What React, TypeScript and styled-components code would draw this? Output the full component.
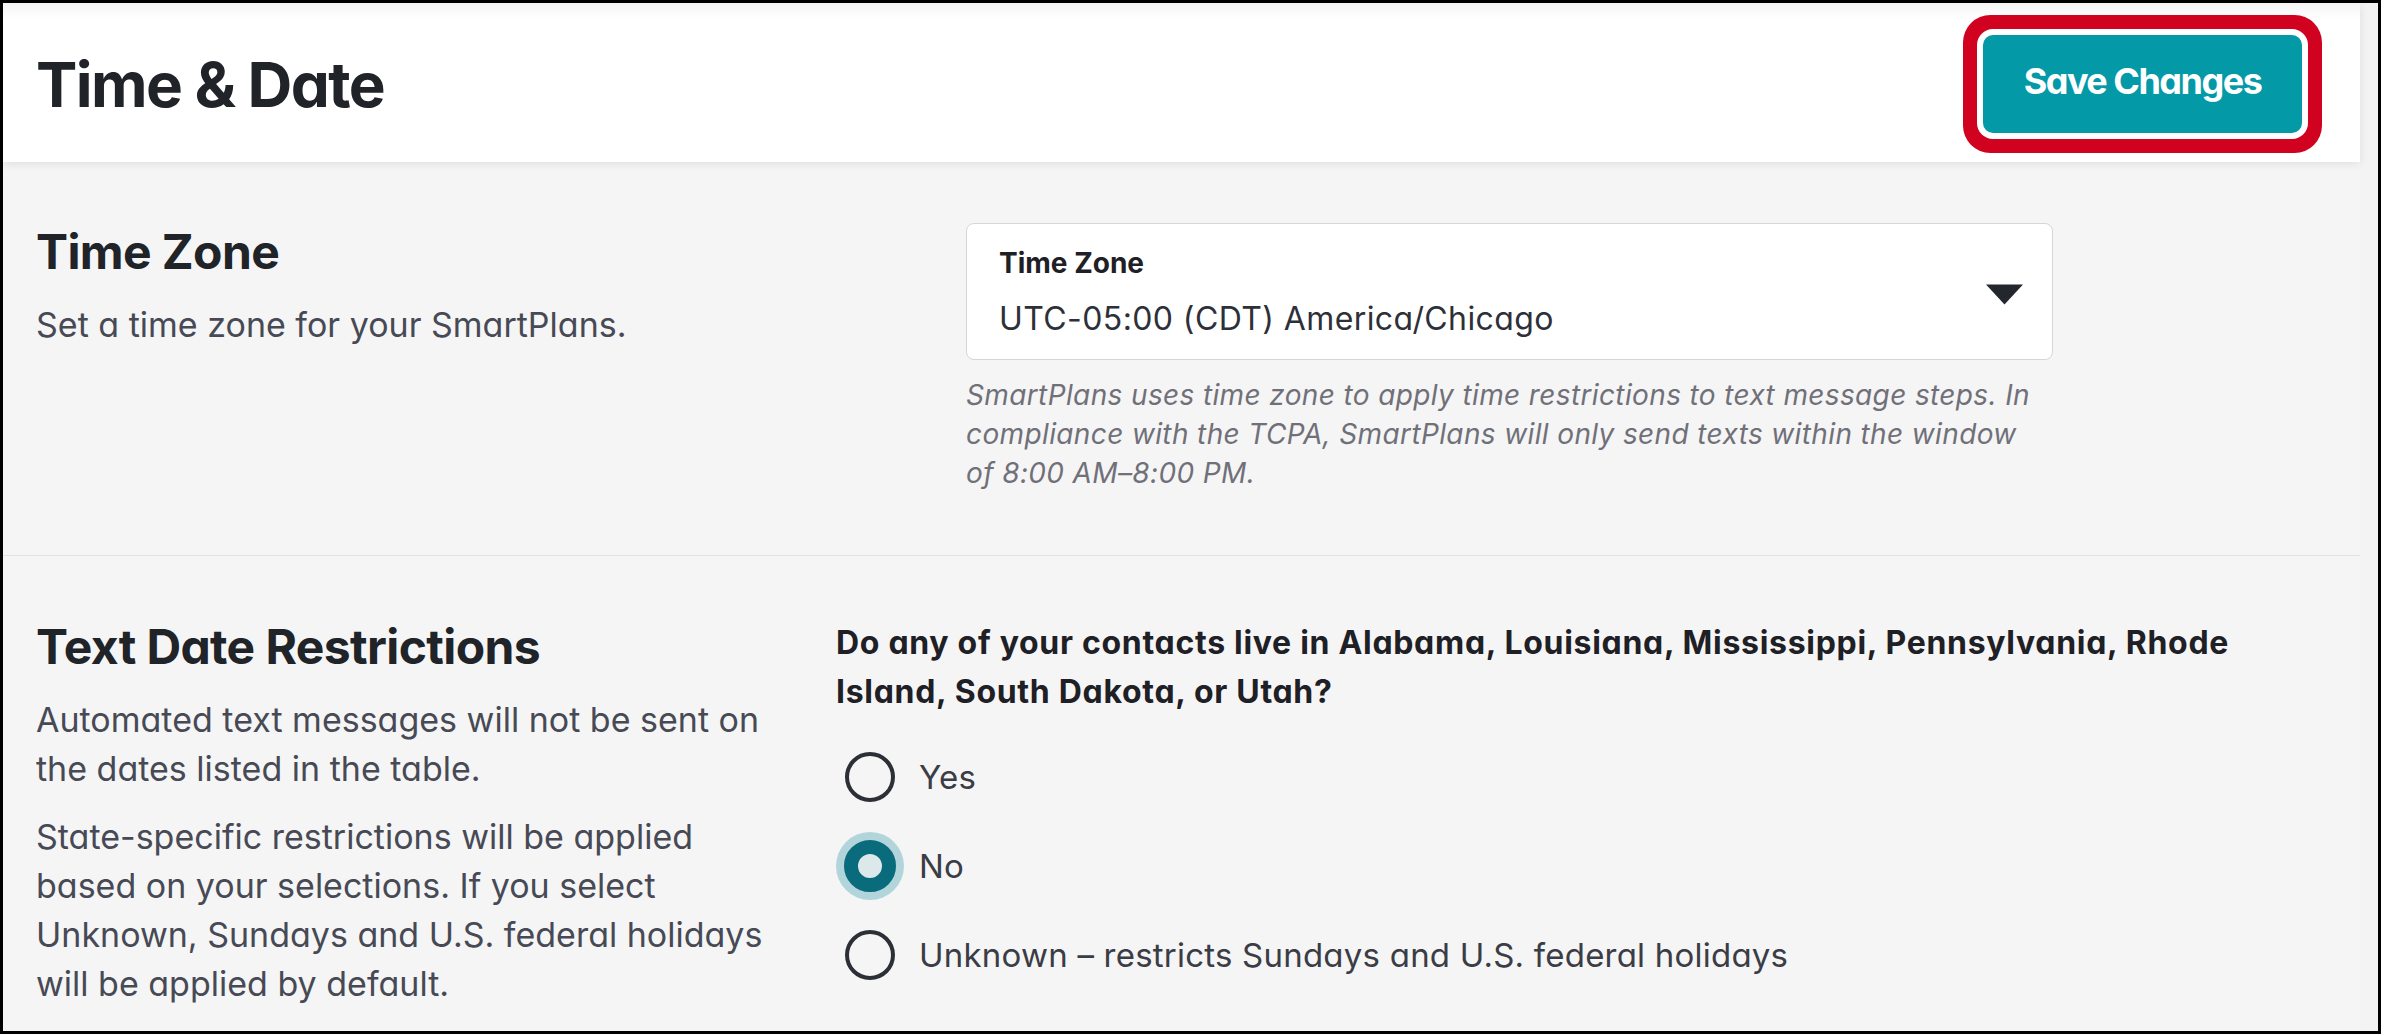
import React from "react";
import styled, { createGlobalStyle } from "styled-components";

const GlobalStyle = createGlobalStyle`
  html, body { margin: 0; padding: 0; background: #ffffff; }
  body {
    font-family: Inter, "Noto Sans", sans-serif;
    font-feature-settings: "cv11" 1;
    -webkit-font-smoothing: antialiased;
  }
  * { box-sizing: border-box; }
`;

const Frame = styled.div`
  width: 2381px;
  height: 1034px;
  border: 3px solid #000;
  background: #f3f3f4;
  display: flex;
  overflow: hidden;
`;

const Main = styled.main`
  flex: 1;
  display: flex;
  flex-direction: column;
  background: #f5f5f5;
  margin-right: 18px;
`;

const Header = styled.header`
  height: 159px;
  flex: none;
  display: flex;
  align-items: center;
  justify-content: space-between;
  padding: 0 58px 0 33px;
  background: linear-gradient(to bottom, #f5f5f6 0, #ffffff 16px);
  box-shadow: 0 2px 9px rgba(0, 0, 0, 0.09);
  position: relative;
  z-index: 1;
`;

const PageTitle = styled.h1`
  margin: 5px 0 0;
  font-size: 62px;
  line-height: 1;
  font-weight: 700;
  letter-spacing: -1.6px;
  color: #202328;
`;

const SaveButton = styled.button`
  width: 319px;
  height: 98px;
  margin-top: 3px;
  border: none;
  border-radius: 10px;
  background: #0399a7;
  color: #ffffff;
  font-family: inherit;
  font-feature-settings: inherit;
  font-size: 36px;
  font-weight: 700;
  letter-spacing: -1.5px;
  padding: 0 0 6px;
  box-shadow: 0 0 0 6px #ffffff, 0 0 0 20px #d0021f;
  cursor: pointer;
`;

const Section = styled.section<{ $cols: string; $divider?: boolean }>`
  display: grid;
  grid-template-columns: ${(p) => p.$cols};
  column-gap: 40px;
  align-items: start;
  padding: ${(p) => (p.$divider ? "62px" : "61px")} 0 62px 33px;
  border-top: ${(p) => (p.$divider ? "1px solid #e1e1e3" : "none")};
`;

const InfoColumn = styled.div`
  display: flex;
  flex-direction: column;
`;

const SectionTitle = styled.h2`
  margin: 0 0 19px;
  font-size: 48px;
  line-height: 57.6px;
  font-weight: 700;
  letter-spacing: -0.6px;
  color: #202328;
`;

const Description = styled.p`
  margin: 0;
  font-size: 34px;
  line-height: 49px;
  color: #474a55;
  & + & {
    margin-top: 19px;
  }
`;

const FieldColumn = styled.div`
  display: flex;
  flex-direction: column;
`;

const SelectBox = styled.div`
  height: 137px;
  display: flex;
  align-items: center;
  justify-content: space-between;
  padding: 22px 28px 20px 32px;
  background: #ffffff;
  border: 1px solid #d4d6d9;
  border-radius: 8px;
`;

const SelectText = styled.div`
  display: flex;
  flex-direction: column;
`;

const SelectLabel = styled.span`
  font-size: 28px;
  line-height: 34px;
  font-weight: 700;
  color: #1e2026;
`;

const SelectValue = styled.span`
  margin-top: 19px;
  font-size: 32px;
  line-height: 40px;
  letter-spacing: 0.4px;
  color: #2e3039;
`;

const Caret = styled.svg`
  flex: none;
  margin-top: 4px;
`;

const HelpText = styled.p`
  margin: 16px 0 0;
  max-width: 1070px;
  font-size: 28px;
  line-height: 39px;
  font-style: italic;
  letter-spacing: 0.37px;
  color: #707079;
`;

const Question = styled.p`
  margin: 0;
  font-size: 32px;
  line-height: 49px;
  font-weight: 700;
  letter-spacing: 0.7px;
  color: #1e2026;
`;

const RadioList = styled.div`
  margin-top: 27px;
  display: flex;
  flex-direction: column;
  gap: 21px;
`;

const RadioRow = styled.label`
  height: 68px;
  display: flex;
  align-items: center;
  gap: 15px;
  cursor: pointer;
`;

const RadioMark = styled.span<{ $checked?: boolean }>`
  width: 68px;
  height: 68px;
  flex: none;
  display: flex;
  align-items: center;
  justify-content: center;

  &::before {
    content: "";
    box-sizing: border-box;
    width: ${(p) => (p.$checked ? "52px" : "50px")};
    height: ${(p) => (p.$checked ? "52px" : "50px")};
    border-radius: 50%;
    border: ${(p) => (p.$checked ? "14px solid #0a6b7c" : "4px solid #2d2f36")};
    background: ${(p) => (p.$checked ? "#dde8ea" : "transparent")};
    box-shadow: ${(p) => (p.$checked ? "0 0 0 8px #b2d5db" : "none")};
  }
`;

const RadioLabel = styled.span`
  font-size: 33px;
  line-height: 40px;
  letter-spacing: 0.22px;
  color: #3a3c46;
`;

const options = [
  { label: "Yes", checked: false },
  { label: "No", checked: true },
  { label: "Unknown – restricts Sundays and U.S. federal holidays", checked: false },
];

export default function App() {
  return (
    <>
      <GlobalStyle />
      <Frame>
        <Main>
          <Header>
            <PageTitle>Time &amp; Date</PageTitle>
            <SaveButton type="button">Save Changes</SaveButton>
          </Header>

          <Section $cols="890px 1087px">
            <InfoColumn>
              <SectionTitle>Time Zone</SectionTitle>
              <Description>Set a time zone for your SmartPlans.</Description>
            </InfoColumn>
            <FieldColumn>
              <SelectBox>
                <SelectText>
                  <SelectLabel>Time Zone</SelectLabel>
                  <SelectValue>UTC-05:00 (CDT) America/Chicago</SelectValue>
                </SelectText>
                <Caret width="39" height="21" viewBox="0 0 39 21">
                  <path d="M1 0.5 L38 0.5 L19.5 20.5 Z" fill="#23262d" />
                </Caret>
              </SelectBox>
              <HelpText>
                SmartPlans uses time zone to apply time restrictions to text message steps. In
                compliance with the TCPA, SmartPlans will only send texts within the window of
                8:00 AM–8:00 PM.
              </HelpText>
            </FieldColumn>
          </Section>

          <Section $cols="760px 1430px" $divider>
            <InfoColumn>
              <SectionTitle>Text Date Restrictions</SectionTitle>
              <Description>
                Automated text messages will not be sent on the dates listed in the table.
              </Description>
              <Description>
                State-specific restrictions will be applied based on your selections. If you
                select Unknown, Sundays and U.S. federal holidays will be applied by default.
              </Description>
            </InfoColumn>
            <FieldColumn>
              <Question>
                Do any of your contacts live in Alabama, Louisiana, Mississippi, Pennsylvania,
                Rhode Island, South Dakota, or Utah?
              </Question>
              <RadioList>
                {options.map((o) => (
                  <RadioRow key={o.label}>
                    <RadioMark $checked={o.checked} />
                    <RadioLabel>{o.label}</RadioLabel>
                  </RadioRow>
                ))}
              </RadioList>
            </FieldColumn>
          </Section>
        </Main>
      </Frame>
    </>
  );
}
